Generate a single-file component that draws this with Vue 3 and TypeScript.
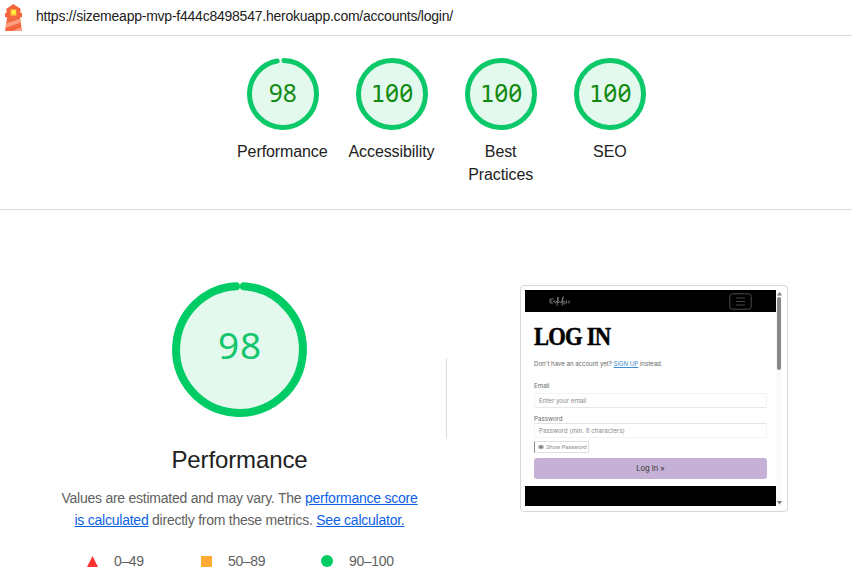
<script setup lang="ts">
interface Category {
  label: string
  score: number
}

const categories: Category[] = [
  { label: 'Performance', score: 98 },
  { label: 'Accessibility', score: 100 },
  { label: 'Best Practices', score: 100 },
  { label: 'SEO', score: 100 },
]

const digits = (score: number): string[] => String(score).split('')
</script>

<template>
  <div class="report">
    <header class="topbar">
      <svg class="logo" width="20" height="28" viewBox="0 0 20 28">
        <path d="M10.3 0L17.5 4.8V9H19V13.2H17L19 27H2L4.2 13.2H2V9H3.5V4.8Z" fill="#f4663b" />
        <path d="M3.2 19.5L17 14.8L17.8 18.5L2.6 24Z" fill="#ff9e80" />
        <path d="M9.5 27L18.4 23L19 27Z" fill="#ff9e80" />
        <path d="M7.5 5h6v7h-6z" fill="#f9a03a" />
        <path d="M8.3 6h4.6v4.6h-4.6z" fill="#ffef3b" />
      </svg>
      <span class="url">https://sizemeapp-mvp-f444c8498547.herokuapp.com/accounts/login/</span>
    </header>

    <section class="scores">
      <div v-for="c in categories" :key="c.label" class="score">
        <div class="dial">
          <svg width="72" height="72" viewBox="0 0 72 72">
            <circle cx="36" cy="36" r="33.5" fill="#e4f9ee" />
            <circle
              cx="36" cy="36" r="33.5" fill="none" stroke="#0bc868" stroke-width="5"
              stroke-linecap="round" pathLength="100"
              :stroke-dasharray="c.score === 100 ? 'none' : '96.8 3.2'"
              transform="rotate(-88.5 36 36)"
            />
          </svg>
          <div class="number">
            <span v-for="(d, i) in digits(c.score)" :key="i" :class="['digit', { one: d === '1' }]">{{ d }}</span>
          </div>
        </div>
        <div class="label">{{ c.label }}</div>
      </div>
    </section>

    <main class="details">
      <div class="summary">
        <div class="dial">
          <svg width="135" height="135" viewBox="0 0 135 135">
            <circle cx="67.5" cy="67.5" r="63.4" fill="#e4f9ee" />
            <circle
              cx="67.5" cy="67.5" r="63.4" fill="none" stroke="#00cc66" stroke-width="8"
              stroke-linecap="round" pathLength="100" stroke-dasharray="98 2"
              transform="rotate(-86 67.5 67.5)"
            />
          </svg>
          <div class="number large"><span class="digit">9</span><span class="digit">8</span></div>
        </div>
        <h1>Performance</h1>
        <p class="desc">
          <span class="line first">Values are estimated and may vary. The <a>performance score</a></span>
          <span class="line">
            <a>is calculated</a> directly from these metrics. <a>See calculator.</a></span>
        </p>
        <div class="legend">
          <span class="range"><svg width="12" height="12"><path d="M6.5 1L12 12H1Z" fill="#ff3333" /></svg>0–49</span>
          <span class="range"><svg width="12" height="12"><path d="M1 1h11v11H1z" fill="#ffaa33" /></svg>50–89</span>
          <span class="range"><svg width="12" height="12"><circle cx="6" cy="6" r="6" fill="#00cc66" /></svg>90–100</span>
        </div>
      </div>
      <div class="divider"></div>
      <div class="frame">
        <div class="site">
          <div class="nav">
            <svg width="22" height="14" viewBox="0 0 22 14" fill="none" stroke="#999" stroke-width=".7">
              <path d="M5 5H1V9H4M1 7H3M4 8Q6 5 6 8T8 7M8 12L9 3L9 9Q11 6 12 9M12 9Q15 1 14 3L13 12M14 8Q16 6 15 9T18 8M18 7Q16 7 17 8T17 9M21 7Q19 7 20 8T19 9" />
            </svg>
            <svg class="burger" width="23" height="17" viewBox="0 0 23 17" fill="none">
              <rect x=".8" y=".8" width="21.4" height="15.4" rx="2.5" stroke="#4a4a4a" />
              <path d="M7 5H16M7 8.5H16M7 12H16" stroke="#484848" />
            </svg>
          </div>
          <div class="content">
            <h2>LOG IN</h2>
            <p class="signup">Don't have an account yet? <a>SIGN UP</a> instead.</p>
            <div class="field-label">Email</div>
            <div class="input">Enter your email</div>
            <div class="field-label second">Password</div>
            <div class="input">Password (min. 8 characters)</div>
            <div class="show">
              <svg width="6" height="6" viewBox="0 0 6 6">
                <ellipse cx="3" cy="3" rx="2.8" ry="2.2" fill="#aaa" />
                <circle cx="3" cy="3" r="1" fill="#666" />
              </svg>
              <span>Show Password</span>
            </div>
            <div class="submit">Log In »</div>
          </div>
          <div class="footer"></div>
        </div>
        <div class="scrollbar">
          <svg width="5" height="4"><path d="M2.5 0L5 3.5H0Z" fill="#777" /></svg>
          <div class="thumb"></div>
          <svg width="5" height="4"><path d="M0 0H5L2.5 3.5Z" fill="#777" /></svg>
        </div>
      </div>
    </main>
  </div>
</template>

<style>
body {
  background: #fff;
  overflow: hidden;
}
</style>

<style scoped>
* {
  box-sizing: border-box;
}
.report {
  width: 852px;
  height: 583px;
  overflow: hidden;
  font-family: "Liberation Sans", Arial, sans-serif;
  color: #212121;
}
.topbar {
  height: 36px;
  border-bottom: 1px solid #dcdcdc;
  display: flex;
  align-items: flex-start;
  padding: 4px 0 0 3px;
  gap: 13px;
}
.url {
  font-size: 14px;
  line-height: 24px;
  letter-spacing: -0.235px;
  white-space: nowrap;
}
.scores {
  height: 174px;
  border-bottom: 1px solid #dcdcdc;
  padding: 22px 0 0 228.2px;
  display: flex;
}
.score {
  width: 109.2px;
  display: flex;
  flex-direction: column;
  align-items: center;
}
.dial {
  display: grid;
  place-items: center;
}
.dial > * {
  grid-area: 1 / 1;
}
.dial svg {
  display: block;
}
.number {
  display: flex;
  align-items: baseline;
  margin-bottom: 2px;
  color: #128a12;
  font-family: "Noto Sans", sans-serif;
  font-size: 24.5px;
  line-height: 30px;
  font-feature-settings: "zero";
}
.digit {
  width: 14.2px;
  text-align: center;
}
.one {
  font-family: "DejaVu Sans Mono", monospace;
  font-size: 23.5px;
}
.number.large {
  margin-bottom: 9px;
  color: #15c66c;
  font-size: 37px;
  line-height: 44px;
}
.large .digit {
  width: 22px;
}
.label {
  width: 92px;
  margin: 10px 1px 0 0;
  text-align: center;
  font-size: 16px;
  line-height: 23px;
  letter-spacing: -0.1px;
}
.details {
  display: flex;
  align-items: flex-start;
}
.summary {
  width: 446px;
  padding: 72px 0 0 33px;
  display: flex;
  flex-direction: column;
  align-items: center;
}
h1 {
  margin: 27px 0 0;
  font-size: 24px;
  line-height: 32px;
  font-weight: 400;
  letter-spacing: -0.12px;
}
.desc {
  margin: 11px 0 0;
  text-align: center;
  font-size: 14px;
  line-height: 22px;
  letter-spacing: -0.24px;
  color: #616161;
}
.line {
  display: block;
  white-space: nowrap;
}
.desc a {
  color: #0c61e8;
  text-decoration: underline;
}
.legend {
  align-self: stretch;
  margin: 19px 0 0 53px;
  display: grid;
  grid-template-columns: 114px 121px 80px;
  font-size: 14px;
  line-height: 22px;
  letter-spacing: -0.35px;
  color: #616161;
}
.range {
  display: flex;
  align-items: center;
  gap: 16px;
}
.divider {
  width: 1px;
  height: 81px;
  margin-top: 148px;
  background: #dcdcdc;
}
.frame {
  width: 268px;
  height: 227px;
  margin: 75px 0 0 73px;
  padding: 4px;
  border: 1px solid #d8d8d8;
  border-radius: 4px;
  display: flex;
}
.site {
  width: 251px;
  height: 216px;
  display: flex;
  flex-direction: column;
  font-family: Inter, sans-serif;
  font-size: 6.2px;
  color: #666;
}
.nav {
  height: 22px;
  background: #000;
  display: flex;
  align-items: center;
  justify-content: space-between;
  padding: 0 24px;
}
.content {
  flex: 1;
  padding: 9px 9px 0;
}
h2 {
  margin: 0;
  width: 90px;
  font-family: "Liberation Serif", serif;
  font-size: 26px;
  line-height: 32px;
  font-weight: 700;
  letter-spacing: -0.9px;
  white-space: nowrap;
  color: #000;
  -webkit-text-stroke: 0.5px #000;
  transform: scaleX(0.87);
  transform-origin: left;
}
.signup {
  margin: 6px 0 0;
  line-height: 10px;
  font-size: 6.1px;
  letter-spacing: -0.02px;
  white-space: nowrap;
}
.signup a {
  color: #3f90d4;
  text-decoration: underline;
}
.field-label {
  margin-top: 13px;
  line-height: 8px;
}
.field-label.second {
  margin-top: 7px;
}
.input {
  height: 15px;
  margin-top: 3px;
  padding-left: 4px;
  border: 1px solid #f3f3f3;
  border-bottom-color: #e8e8e8;
  border-radius: 1px;
  line-height: 13px;
  color: #888;
}
.second + .input {
  margin-top: 0;
  border-top-color: #e4e4e4;
  border-bottom-color: #f3f3f3;
}
.show {
  width: 55px;
  height: 12px;
  margin-top: 3px;
  padding-left: 3px;
  border: 1px solid #e0e0e0;
  border-left-color: #888;
  border-radius: 1px;
  display: flex;
  align-items: center;
  gap: 2px;
  font-size: 5.4px;
  color: #888;
  white-space: nowrap;
}
.submit {
  height: 21px;
  margin-top: 5px;
  border-radius: 3px;
  background: #c4b1d5;
  text-align: center;
  line-height: 21px;
  font-size: 7.5px;
  color: #333;
}
.footer {
  height: 20px;
  background: #000;
}
.scrollbar {
  width: 6px;
  height: 216px;
  background: #fafafa;
  display: flex;
  flex-direction: column;
  align-items: center;
  padding: 2px 0 1px;
}
.thumb {
  width: 4px;
  height: 73px;
  margin: 1px 0 auto;
  border-radius: 2px;
  background: #888;
}
</style>
